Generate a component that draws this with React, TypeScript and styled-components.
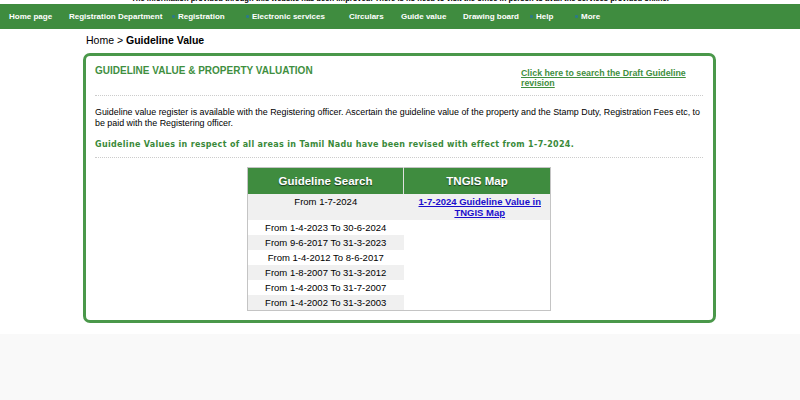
import React from "react";
import styled, { createGlobalStyle } from "styled-components";

const GlobalStyle = createGlobalStyle`
  html, body { margin: 0; padding: 0; }
  body {
    background: #f9f9f9;
    font-family: "Liberation Sans", Arial, sans-serif;
    color: #000;
  }
`;

const Page = styled.div`
  background: #ffffff;
  padding-bottom: 11px;
`;

const Notice = styled.div`
  height: 4px;
  overflow: hidden;
  text-align: center;
`;

const NoticeText = styled.span`
  display: block;
  margin-top: -6px;
  line-height: 10px;
  font-size: 7.6px;
  font-weight: bold;
`;

const Nav = styled.nav`
  height: 25px;
  background: #3f8c3f;
  display: flex;
  align-items: center;
  padding-left: 9px;
`;

const NavItem = styled.div<{ $w?: number }>`
  ${(p) => (p.$w ? `width: ${p.$w}px;` : "")}
  flex: none;
  display: flex;
  align-items: center;
  color: #ffffff;
  font-size: 8px;
  font-weight: bold;
  white-space: nowrap;
`;

const Dot = styled.span`
  width: 3px;
  height: 3px;
  border-radius: 1px;
  background: #2d7a86;
  margin-right: 3px;
`;

const Main = styled.main`
  width: 633px;
  margin-left: 83px;
`;

const Crumb = styled.div`
  padding: 5px 0 0 3px;
  height: 19px;
  font-size: 10.5px;
  line-height: 12px;
  b { font-weight: bold; }
`;

const Card = styled.section`
  border: 3px solid #4a984a;
  border-radius: 7px;
  padding: 9px 10px 9px 9px;
`;

const CardHead = styled.div`
  display: flex;
  justify-content: space-between;
  align-items: flex-start;
  padding-bottom: 7px;
  border-bottom: 1px dotted #cccccc;
`;

const Title = styled.h1`
  margin: 0;
  font-size: 10px;
  line-height: 12px;
  font-weight: bold;
  color: #3f8f3f;
`;

const DraftLink = styled.a`
  width: 182px;
  margin: 3px 0 0 0;
  font-size: 8.8px;
  line-height: 10px;
  font-weight: bold;
  color: #3f8f3f;
  text-decoration: underline;
`;

const Para = styled.p`
  margin: 11px 0 0 0;
  font-size: 8.9px;
  line-height: 11px;
`;

const Revised = styled.p`
  margin: 11px 0 0 0;
  padding-bottom: 8px;
  border-bottom: 1px dotted #cccccc;
  font-family: "DejaVu Sans", Verdana, sans-serif;
  font-size: 8px;
  font-weight: bold;
  letter-spacing: 0.32px;
  color: #3a8a3a;
`;

const TableWrap = styled.div`
  display: flex;
  justify-content: center;
  padding-top: 9px;
`;

const Table = styled.table`
  width: 304px;
  border: 1px solid #c4c4c4;
  border-collapse: collapse;
  font-size: 9.5px;
`;

const Th = styled.th<{ $last?: boolean }>`
  height: 26px;
  padding: 0;
  background: #3f8c3f;
  color: #ffffff;
  font-size: 11.5px;
  font-weight: bold;
  text-shadow: 0 1px 1px rgba(0, 0, 0, 0.6);
  border-right: ${(p) => (p.$last ? "none" : "1px solid #e0e0e0")};
  width: ${(p) => (p.$last ? "146px" : "155px")};
`;

const Td = styled.td<{ $shade?: boolean; $first?: boolean }>`
  padding: 0;
  height: ${(p) => (p.$first ? "26px" : "15px")};
  vertical-align: ${(p) => (p.$first ? "top" : "middle")};
  padding-top: ${(p) => (p.$first ? "2px" : "0")};
  box-sizing: border-box;
  text-align: center;
  background: ${(p) => (p.$shade ? "#f0f0f0" : "#ffffff")};
`;

const MapLink = styled.a`
  display: inline-block;
  margin-left: 6px;
  color: #1a0dcc;
  font-weight: bold;
  text-decoration: underline;
  line-height: 11px;
  font-size: 9.5px;
`;

const periods = [
  "From 1-4-2023 To 30-6-2024",
  "From 9-6-2017 To 31-3-2023",
  "From 1-4-2012 To 8-6-2017",
  "From 1-8-2007 To 31-3-2012",
  "From 1-4-2003 To 31-7-2007",
  "From 1-4-2002 To 31-3-2003",
];

const navItems: { label: string; w?: number; dot?: boolean }[] = [
  { label: "Home page", w: 60 },
  { label: "Registration Department", w: 103 },
  { label: "Registration", w: 74, dot: true },
  { label: "Electronic services", w: 103, dot: true },
  { label: "Circulars", w: 52 },
  { label: "Guide value", w: 62 },
  { label: "Drawing board", w: 67 },
  { label: "Help", w: 45, dot: true },
  { label: "More", dot: true },
];

export default function App() {
  return (
    <>
      <GlobalStyle />
      <Page>
        <Notice>
          <NoticeText>
            The information provided through this website has been improved. There is no need to visit the office in person to avail the services provided online.
          </NoticeText>
        </Notice>
        <Nav>
          {navItems.map((n) => (
            <NavItem key={n.label} $w={n.w}>
              {n.dot && <Dot />}
              {n.label}
            </NavItem>
          ))}
        </Nav>
        <Main>
          <Crumb>
            Home &gt; <b>Guideline Value</b>
          </Crumb>
          <Card>
            <CardHead>
              <Title>GUIDELINE VALUE &amp; PROPERTY VALUATION</Title>
              <DraftLink href="#">Click here to search the Draft Guideline revision</DraftLink>
            </CardHead>
            <Para>
              Guideline value register is available with the Registering officer. Ascertain the guideline value of the property and the Stamp Duty, Registration Fees etc, to be paid with the Registering officer.
            </Para>
            <Revised>
              Guideline Values in respect of all areas in Tamil Nadu have been revised with effect from 1-7-2024.
            </Revised>
            <TableWrap>
              <Table>
                <thead>
                  <tr>
                    <Th>Guideline Search</Th>
                    <Th $last>TNGIS Map</Th>
                  </tr>
                </thead>
                <tbody>
                  <tr>
                    <Td $shade $first>From 1-7-2024</Td>
                    <Td $shade $first>
                      <MapLink href="#">
                        1-7-2024 Guideline Value in
                        <br />
                        TNGIS Map
                      </MapLink>
                    </Td>
                  </tr>
                  {periods.map((p, i) => (
                    <tr key={p}>
                      <Td $shade={i % 2 === 1}>{p}</Td>
                      {i === 0 && <Td rowSpan={periods.length} />}
                    </tr>
                  ))}
                </tbody>
              </Table>
            </TableWrap>
          </Card>
        </Main>
      </Page>
    </>
  );
}
